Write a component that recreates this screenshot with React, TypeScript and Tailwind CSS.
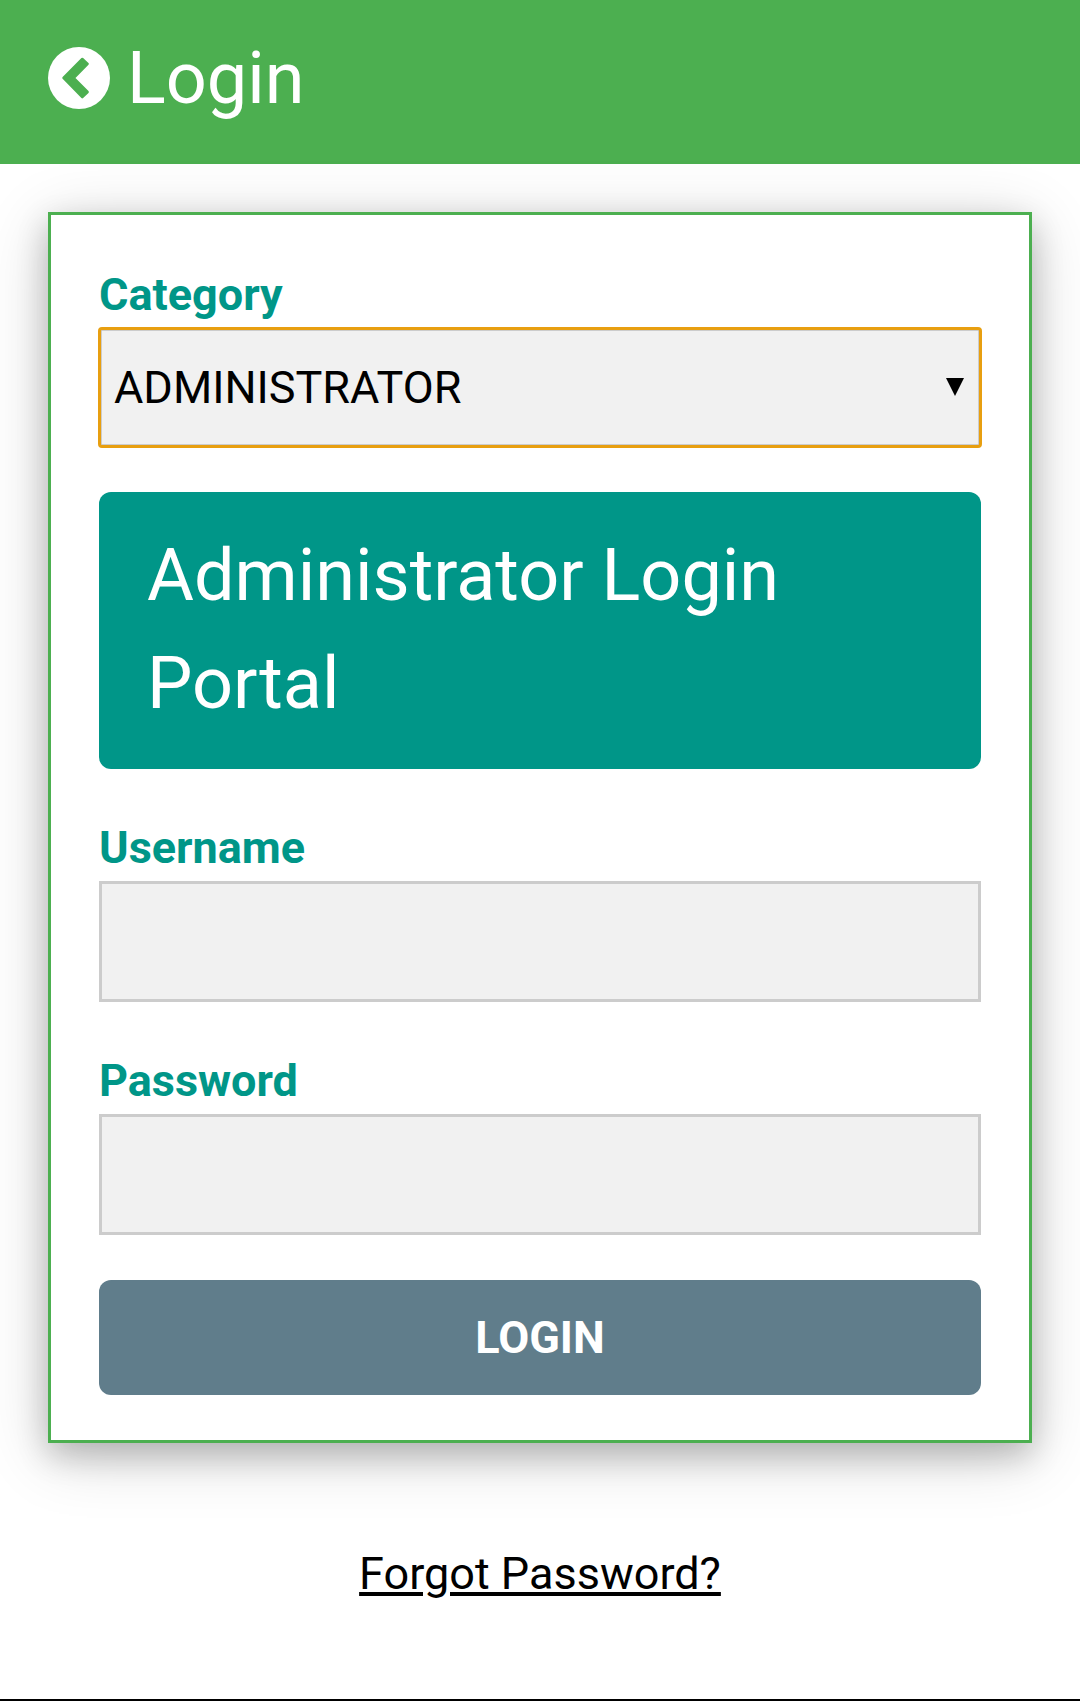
const roboto = "font-['Roboto',sans-serif]";

export default function App() {
  return (
    <div className={`w-[1080px] h-[1701px] bg-white flex flex-col ${roboto}`}>
      <header className="h-[164px] bg-[#4CAF50] flex items-center pl-[48px] pb-[7px] text-white shrink-0">
        <svg viewBox="0 0 62 62" className="w-[62px] h-[62px] mr-[17px] mb-[1px]">
          <circle cx="31" cy="31" r="31" fill="#fff" />
          <path
            d="M15.5 31 L34.3 12 L39.6 16.9 L25.6 31 L39.6 45 L34.3 50.2 Z"
            fill="#4CAF50"
            stroke="#4CAF50"
            strokeWidth="2.5"
            strokeLinejoin="round"
          />
        </svg>
        <h1 className="text-[72px] leading-[108px] font-normal">Login</h1>
      </header>
      <main className="flex-1 flex flex-col">
        <form className="mx-[48px] mt-[48px] border-[3px] border-[#4CAF50] bg-white px-[48px] pt-[46px] pb-[45px] shadow-[0_12px_30px_0_rgba(0,0,0,0.2),0_12px_60px_0_rgba(0,0,0,0.19)]">
          <label className="block text-[45px] leading-[67px] font-bold text-[#009688]">Category</label>
          <div className="h-[119px] border-[3px] border-[#ccc] bg-[#f1f1f1] rounded-[3px] outline-[3px] outline-offset-[-2px] outline-[#E89F10] flex items-center justify-between pl-[12px] pr-[14px]">
            <span className="text-[45px] text-black">ADMINISTRATOR</span>
            <svg viewBox="0 0 18 18" className="w-[18px] h-[18px] mb-[2px]">
              <path d="M0 0 H18 L9 18 Z" fill="#000" />
            </svg>
          </div>
          <div className="mt-[45px] h-[277px] bg-[#009688] rounded-[12px] px-[48px] pt-[30px] text-white text-[72px] leading-[108px]">
            Administrator Login Portal
          </div>
          <label className="block mt-[45px] text-[45px] leading-[67px] font-bold text-[#009688]">Username</label>
          <input type="text" className="block w-full h-[121px] border-[3px] border-[#ccc] bg-[#f1f1f1]" />
          <label className="block mt-[45px] text-[45px] leading-[67px] font-bold text-[#009688]">Password</label>
          <input type="password" className="block w-full h-[121px] border-[3px] border-[#ccc] bg-[#f1f1f1]" />
          <button type="button" className="block w-full h-[115px] mt-[45px] bg-[#607D8B] rounded-[12px] text-white text-[45px] font-bold">
            LOGIN
          </button>
        </form>
        <div className="mt-[97px] text-center">
          <a href="#" className="text-[45px] leading-[67px] text-black underline">Forgot Password?</a>
        </div>
      </main>
      <div className="h-[2px] bg-black shrink-0" />
    </div>
  );
}
